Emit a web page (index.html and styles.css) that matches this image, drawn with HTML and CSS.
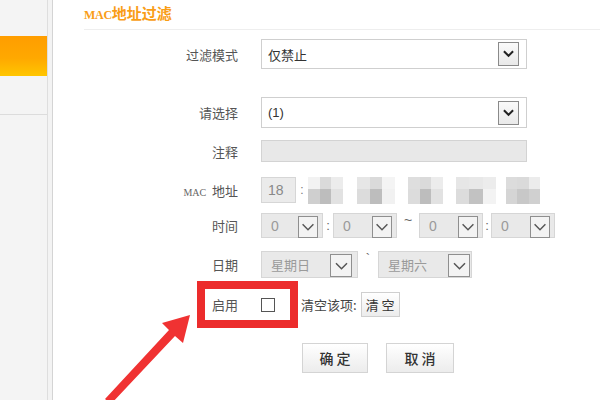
FILE: index.html
```html
<!DOCTYPE html>
<html lang="zh-CN">
<head>
<meta charset="utf-8">
<title>MAC地址过滤</title>
<link rel="stylesheet" href="styles.css">
</head>
<body>
<div class="page">
  <aside class="sidebar">
    <div class="nav-gap"></div>
    <div class="nav-active"></div>
    <div class="nav-item"></div>
  </aside>
  <div class="divider"></div>
  <main class="content">
    <h2 class="title"><span class="title-mac">MAC</span>地址过滤</h2>
    <div class="form">
      <div class="row r1">
        <span class="lbl">过滤模式</span>
        <div class="select wide"><span class="val">仅禁止</span><span class="arrow"><svg viewBox="0 0 20 24"><polyline points="5,9 10,14 15,9"/></svg></span></div>
      </div>
      <div class="row r2">
        <span class="lbl">请选择</span>
        <div class="select wide"><span class="val latin">(1)</span><span class="arrow"><svg viewBox="0 0 20 24"><polyline points="5,9 10,14 15,9"/></svg></span></div>
      </div>
      <div class="row r3">
        <span class="lbl">注释</span>
        <div class="textbox"></div>
      </div>
      <div class="row r4">
        <span class="lbl"><span class="mac-small">MAC</span>&nbsp; 地址</span>
        <div class="mac">
          <div class="mac-box">18</div>
          <span class="sep">:</span>
          <div class="mosaic m1"><i></i><i></i><i></i><i></i><i></i><i></i></div>
          <div class="mosaic m2"><i></i><i></i><i></i><i></i><i></i><i></i></div>
          <div class="mosaic m3"><i></i><i></i><i></i><i></i><i></i><i></i></div>
          <div class="mosaic m4"><i></i><i></i><i></i><i></i><i></i><i></i></div>
          <div class="mosaic m5"><i></i><i></i><i></i><i></i><i></i><i></i></div>
        </div>
      </div>
      <div class="row r5">
        <span class="lbl">时间</span>
        <div class="inline">
          <div class="select dis t1"><span class="val num">0</span><span class="arrow"><svg viewBox="0 0 20 24"><polyline points="4,9 10,15 16,9"/></svg></span></div>
          <span class="sep colon">:</span>
          <div class="select dis t2"><span class="val num">0</span><span class="arrow"><svg viewBox="0 0 20 24"><polyline points="4,9 10,15 16,9"/></svg></span></div>
          <span class="sep tilde">~</span>
          <div class="select dis t2"><span class="val num">0</span><span class="arrow"><svg viewBox="0 0 20 24"><polyline points="4,9 10,15 16,9"/></svg></span></div>
          <span class="sep colon narrow">:</span>
          <div class="select dis t2"><span class="val num">0</span><span class="arrow"><svg viewBox="0 0 20 24"><polyline points="4,9 10,15 16,9"/></svg></span></div>
        </div>
      </div>
      <div class="row r6">
        <span class="lbl">日期</span>
        <div class="inline">
          <div class="select dis d1"><span class="val">星期日</span><span class="arrow"><svg viewBox="0 0 20 24"><polyline points="4,9 10,15 16,9"/></svg></span></div>
          <span class="sep tick">`</span>
          <div class="select dis d2"><span class="val">星期六</span><span class="arrow"><svg viewBox="0 0 20 24"><polyline points="4,9 10,15 16,9"/></svg></span></div>
        </div>
      </div>
      <div class="row r7">
        <span class="lbl">启用</span>
        <span class="checkbox"></span>
        <span class="clear-text">清空该项:</span>
        <button class="btn small" type="button">清 空</button>
        <span class="highlight"></span>
      </div>
      <div class="row r8">
        <button class="btn action" type="button">确 定</button>
        <button class="btn action wide-btn" type="button">取 消</button>
      </div>
    </div>
  </main>
  <svg class="pointer" viewBox="0 0 600 400" width="600" height="400">
    <polygon points="190,315 183,343 175,336 111,404 105,399 169,330 162,323"/>
  </svg>
</div>
</body>
</html>
```
FILE: styles.css
```css
html, body {
  margin: 0;
  padding: 0;
  background: #fff;
}

body {
  font-family: "Noto Sans CJK SC", "Liberation Sans", sans-serif;
  font-size: 13px;
  color: #555;
}

.page {
  position: relative;
  width: 600px;
  height: 400px;
  overflow: hidden;
  display: flex;
}

/* left navigation column */
.sidebar {
  width: 47px;
  flex: none;
  background: #f4f4f4;
}

.nav-gap {
  height: 36px;
}

.nav-active {
  height: 40px;
  background: linear-gradient(#ff9d00, #ffa800 55%, #ffc600);
}

.nav-item {
  height: 38px;
  border-bottom: 1px solid #dcdcdc;
}

.divider {
  width: 4px;
  flex: none;
  background: #f3f3f3;
  border-left: 1px solid #dedede;
  border-right: 1px solid #d4d4d4;
}

/* main panel */
.content {
  flex: 1;
  padding-left: 31px;
}

.title {
  margin: 0;
  height: 29px;
  line-height: 25px;
  font-size: 15px;
  font-weight: bold;
  color: #f99d16;
  border-bottom: 1px solid #eeeeee;
}

.title-mac {
  font-family: "Liberation Serif", serif;
  font-size: 12px;
  font-weight: bold;
  letter-spacing: -0.3px;
}

.form {
  display: flex;
  flex-direction: column;
}

.row {
  display: flex;
  align-items: center;
  position: relative;
}

.lbl {
  width: 154px;
  flex: none;
  text-align: right;
  margin-right: 23px;
  color: #555;
}

.mac-small {
  font-family: "Liberation Serif", serif;
  font-size: 10px;
  color: #666;
}

.r1 { margin-top: 9px; height: 30px; }
.r2 { margin-top: 28px; height: 31px; }
.r3 { margin-top: 12px; height: 22px; }
.r4 { margin-top: 15px; height: 26px; }
.r5 { margin-top: 10px; height: 25px; }
.r6 { margin-top: 13px; height: 27px; }
.r7 { margin-top: 3px; height: 47px; }
.r8 { margin-top: 15px; height: 30px; padding-left: 218px; }

/* select boxes */
.select {
  position: relative;
  box-sizing: border-box;
  display: flex;
  align-items: center;
  border: 1px solid #cfcfcf;
  background: #fff;
  height: 100%;
}

.select .val {
  padding-left: 6px;
  color: #333;
  font-size: 13px;
}

.select .latin {
  font-family: "Liberation Sans", sans-serif;
  font-size: 13px;
}

.arrow {
  position: absolute;
  top: 2px;
  right: 7px;
  width: 21px;
  height: 24px;
  box-sizing: border-box;
  border: 1px solid #8a8a8a;
  background: linear-gradient(#fafafa, #e9e9e9);
  display: flex;
  align-items: center;
  justify-content: center;
}

.arrow svg {
  width: 19px;
  height: 22px;
  fill: none;
  stroke: #222;
  stroke-width: 2.2;
}

.wide {
  width: 266px;
}

.r2 .select {
  height: 31px;
}

.r2 .arrow {
  top: 3px;
}

/* disabled selects */
.dis {
  background: #e9e9e9;
  border-color: #d6d6d6;
}

.dis .val {
  color: #9a9a9a;
  padding-left: 9px;
}

.dis .num {
  font-family: "Liberation Sans", sans-serif;
  font-size: 14px;
}

.dis .arrow {
  top: 2px;
  right: 4px;
  width: 20px;
  height: 22px;
  border-color: #8f8f8f;
  background: #f3f3f3;
}

.dis .arrow svg {
  stroke: #555;
  stroke-width: 1.6;
}

.inline {
  display: flex;
  align-items: center;
  height: 100%;
}

.t1, .t2 { width: 62px; }
.t2 { width: 64px; }

.d1 { width: 97px; }
.d1 .arrow { right: 5px; width: 22px; height: 23px; }
.d2 { width: 94px; }
.d2 .arrow { right: 1px; width: 22px; height: 23px; }

.sep {
  color: #666;
  text-align: center;
  font-family: "Liberation Sans", sans-serif;
}

.colon { width: 10px; font-size: 13px; }
.colon.narrow { width: 8px; }
.tilde { width: 22px; font-size: 14px; position: relative; top: -6px; }
.tick { width: 20px; font-size: 13px; position: relative; top: -6px; }

/* comment input */
.textbox {
  box-sizing: border-box;
  width: 266px;
  height: 22px;
  background: #e8e8e8;
  border: 1px solid #d3d3d3;
}

/* mac address fields */
.mac {
  display: flex;
  align-items: center;
  height: 100%;
}

.mac-box {
  box-sizing: border-box;
  width: 35px;
  height: 26px;
  background: #ebebeb;
  border: 1px solid #d6d6d6;
  color: #888;
  font-family: "Liberation Sans", sans-serif;
  font-size: 14px;
  line-height: 24px;
  padding-left: 6px;
}

.mac .sep {
  width: 12px;
  font-size: 12px;
  color: #777;
}

.mosaic {
  width: 35px;
  height: 27px;
  display: grid;
  grid-template-columns: repeat(3, 1fr);
  grid-template-rows: 12px 15px;
  margin-right: 13px;
}

.mosaic i {
  background: #e4e4e4;
}

.mosaic i:nth-child(1) { background: #e6e6e6; }
.mosaic i:nth-child(2) { background: #dadada; }
.mosaic i:nth-child(3) { background: #ececec; }
.mosaic i:nth-child(4) { background: #dcdcdc; }
.mosaic i:nth-child(5) { background: #bdbdbd; }
.mosaic i:nth-child(6) { background: #e2e2e2; }

.m1 i:nth-child(1) { background: #f2f2f2; }
.m1 i:nth-child(4) { background: #cfcfcf; }
.m2 { margin-left: 1px; width: 38px; }
.m2 i:nth-child(3) { background: #f4f4f4; }
.m2 i:nth-child(6) { background: #f1f1f1; }
.m3 i:nth-child(1) { background: #dedede; }
.m4 { width: 40px; margin-right: 10px; }
.m4 i:nth-child(2) { background: #e8e8e8; }
.m4 i:nth-child(5) { background: #c2c2c2; }
.m4 i:nth-child(6) { background: #f3f3f3; }
.m5 { width: 34px; }
.m5 i:nth-child(1) { background: #dcdcdc; }
.m5 i:nth-child(4) { background: #d5d5d5; }
.m5 i:nth-child(5) { background: #c8c8c8; }
.m5 i:nth-child(6) { background: #d0d0d0; }

/* enable row */
.checkbox {
  box-sizing: border-box;
  width: 14px;
  height: 14px;
  border: 1px solid #555;
  background: #fff;
}

.clear-text {
  margin-left: 26px;
  color: #444;
  font-size: 13px;
}

.btn {
  font-family: "Noto Sans CJK SC", sans-serif;
  box-sizing: border-box;
  border: 1px solid #cfcfcf;
  background: linear-gradient(#ffffff, #ececec);
  color: #333;
  padding: 0;
  cursor: pointer;
}

.btn.small {
  margin-left: 4px;
  width: 39px;
  height: 25px;
  font-size: 13px;
}

.btn.action {
  width: 66px;
  height: 30px;
  font-size: 14px;
  font-weight: 500;
  color: #333;
  border-color: #d4d4d4;
}

.btn.wide-btn {
  width: 68px;
  margin-left: 18px;
}

/* red annotation frame around the enable switch */
.highlight {
  position: absolute;
  left: 113px;
  top: 0;
  width: 101px;
  height: 47px;
  box-sizing: border-box;
  border: 8px solid #ec2c2c;
  pointer-events: none;
}

/* red annotation arrow */
.pointer {
  position: absolute;
  left: 0;
  top: 0;
  pointer-events: none;
}

.pointer polygon {
  fill: #f03232;
}
```
